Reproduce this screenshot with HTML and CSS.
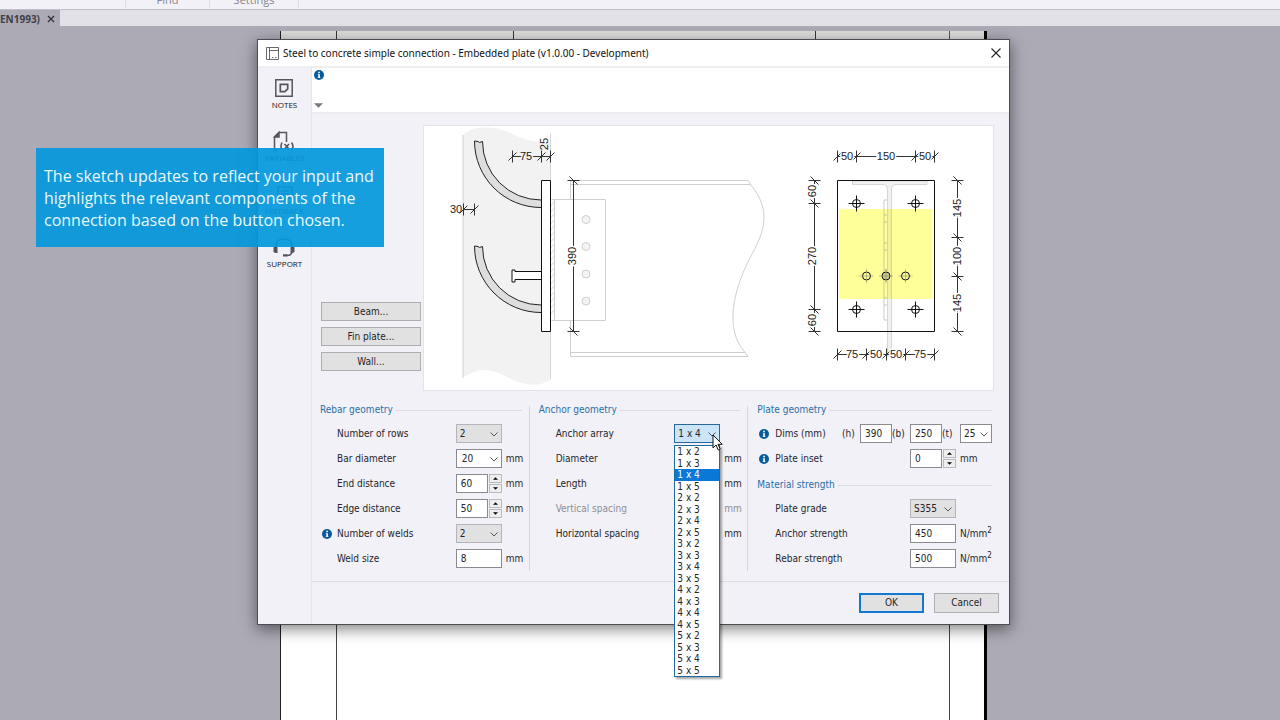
FILE: index.html
```html
<!DOCTYPE html>
<html lang="en">
<head>
<meta charset="utf-8">
<title>Steel to concrete simple connection</title>
<link rel="stylesheet" href="styles.css">
</head>
<body>
<div class="desktop">
  <header class="ribbon">
    <span class="ribbon-group ribbon-find">Find</span>
    <span class="ribbon-group ribbon-settings">Settings</span>
  </header>
  <nav class="tabs">
    <div class="tab">EN1993)
      <button class="tab-close" aria-label="Close tab"><svg width="8" height="8" viewBox="0 0 8 8"><path d="M1 1l6 6M7 1l-6 6" stroke="#34343c" stroke-width="1.4"/></svg></button>
    </div>
  </nav>
  <main class="workspace">
    <div class="paper">
      <div class="paper-head"><i></i><i></i><i></i></div>
      <div class="paper-body"></div>
    </div>
  </main>

  <section class="dialog" role="dialog" aria-labelledby="dlg-title">
    <header class="titlebar">
      <svg class="app-icon" width="13" height="13" viewBox="0 0 13 13" fill="none" stroke="#66666f"><path d="M.5 .5h12v12H.5zM3.500 .5v12M3.500 3.500h9"/><path d="M6 10.500h1.500M9 10.500h1.500" stroke-width="1.200"/></svg>
      <h1 id="dlg-title">Steel to concrete simple connection - Embedded plate (v1.0.00 - Development)</h1>
      <button class="close" aria-label="Close"><svg width="10" height="10" viewBox="0 0 10 10"><path d="M.5 .5l9 9M9.500 .5l-9 9" stroke="#222" stroke-width="1.100"/></svg></button>
    </header>
    <div class="dialog-body">
      <nav class="side">
        <button><svg width="20" height="20" viewBox="0 0 20 20" fill="none" stroke="#555562" stroke-width="1.500"><path d="M1.800 1.800h16.400v16.400H1.800z"/><path d="M6.300 6.300h7.400v4.600l-2.800 2.800H6.300z" stroke-width="1.700"/></svg>NOTES</button>
        <button><svg width="22" height="20" viewBox="0 0 22 20" fill="none" stroke="#555562" stroke-width="1.500"><path d="M5 19H1.500V6l4.500-4.500h7.500V11"/><path d="M1.500 6H6V1.500z" fill="#555562"/><path d="M9 11.500q-2 4 0 7.500M18.500 11.500q3 4 0 7.500M11.500 13l4.500 5M16 13l-4.500 5" stroke-width="1.600"/></svg>VARIABLES</button>
        <button><svg width="20" height="20" viewBox="0 0 20 20" fill="none" stroke="#555562" stroke-width="1.500"><path d="M3 3h14v11h-6l-3 4v-4H3zM6 7h8M6 10h8"/></svg>FEEDBACK</button>
        <button><svg width="22" height="20" viewBox="0 0 22 20" fill="none" stroke="#555562" stroke-width="1.700"><path d="M3 11V8q0-6 8-6t8 6v3M19 15q-.5 3.500-5 3.500"/><path d="M.5 10h4v6h-2l-2-1zM17.500 10h4v5l-2 1h-2zM10 17.300h4.500v2.200H10z" fill="#555562" stroke="none"/></svg>SUPPORT</button>
      </nav>
      <div class="main">
        <div class="notice">
          <svg class="info" viewBox="0 0 10 10"><circle cx="5" cy="5" r="5" fill="#075a9c"/><path d="M4.200 1.800h1.700v1.400H4.200zM3.800 4.200h2.100v3h.5v.9H3.700v-.9h.6V5.100h-.5z" fill="#fff"/></svg>
          <svg width="9" height="5" viewBox="0 0 9 5"><path d="M0 .2h9L4.500 4.800z" fill="#777781"/></svg>
        </div>
        <div class="overview">
          <div class="parts">
            <button>Beam...</button>
            <button>Fin plate...</button>
            <button>Wall...</button>
          </div>
          <svg class="sketch" viewBox="424 126 569 264" role="img" aria-label="Connection sketch">
            <defs>
              <path id="tv" d="M0-6V6M-4 4L4-4"/>
              <path id="th" d="M-6 0H6M-4-4L4 4"/>
              <g id="anchor"><circle r="4"/><path d="M-8 0H8M0-8V8"/></g>
              <g id="hole"><circle r="4"/><path d="M-7 0H7M0-7V7" stroke="#888870" stroke-width=".6"/></g>
            </defs>
            <path d="M463 135C475 124 495 126 510 133S535 143 551 142V379C540 388 525 386 505 376S475 370 463 378z" fill="#f2f2f2"/>
            <path d="M463 135V378M550.500 134V379" stroke="#d4d4d4" fill="none"/>
            <g fill="none" stroke="#cfcfcf">
              <path d="M570.500 200V180.500H748L751 185C772 211 764 232 752 254S724 316 739 344Q743 350 748 356.500H570.500V320M570.500 184.500H751M570.500 352.500H745"/>
              <path d="M551.500 199.500H605.500V320.500H551.500M554.500 200V320"/>
              <path d="M554 202l-3 4m3 2l-3 4m3 2l-3 4m3 2l-3 4m3 2l-3 4m3 2l-3 4m3 2l-3 4m3 2l-3 4m3 2l-3 4m3 2l-3 4m3 2l-3 4m3 2l-3 4m3 2l-3 4m3 2l-3 4m3 2l-3 4m3 2l-3 4m3 2l-3 4m3 2l-3 4m3 2l-3 4" stroke-width=".7"/>
              <g fill="#f3f3f3"><circle cx="586" cy="219.500" r="4"/><circle cx="586" cy="246.500" r="4"/><circle cx="586" cy="274" r="4"/><circle cx="586" cy="301" r="4"/></g>
            </g>
            <g fill="#dedede" stroke="#222">
              <path id="rebar" d="M541 207.500A66.500 66.500 0 0 1 474.500 141L478 141.500 479.500 142.500 482.500 141.500A58.500 58.500 0 0 0 541 200"/>
              <use href="#rebar" y="105"/>
            </g>
            <path d="M541.500 271.500H515V270H512V282H515V279.500H541.500" fill="#fff" stroke="#111"/>
            <path d="M541.500 180.500H550.500V331.500H541.500z" fill="#fff" stroke="#111"/>

            <g class="dim">
              <path d="M512 156.500H551M463 209.500H474.500M573.500 181V332"/>
              <use href="#tv" x="512.500" y="156.500"/><use href="#tv" x="541.500" y="156.500"/><use href="#tv" x="550.500" y="156.500"/>
              <use href="#tv" x="463.500" y="209.500"/><use href="#tv" x="474.500" y="209.500"/>
              <use href="#th" x="573.500" y="180.500"/><use href="#th" x="573.500" y="331.500"/>
            </g>
            <g class="num">
              <text class="on-wall" x="526" y="160">75</text>
              <text class="plain" x="456" y="213">30</text>
              <text class="plain" transform="translate(548 144)rotate(-90)">25</text>
              <text transform="translate(576 256)rotate(-90)">390</text>
            </g>

            <path d="M839 209h93.500v90H839z" fill="#ffff99"/>
            <path d="M852.500 181V184.500H884Q887.500 185 887.500 189V356H891.500V189Q891.500 185 895 184.500H927V181z" fill="#999" fill-opacity=".14" stroke="#999" stroke-opacity=".35"/>
            <path d="M887 200H884V320H887M884 215h3M884 222h3M884 243h3M884 250h3M884 270h3M884 277h3M884 298h3M884 305h3" fill="none" stroke="#999" stroke-opacity=".5"/>
            <path d="M837.500 180.500H934.500V331.500H837.500z" fill="none" stroke="#111"/>
            <g fill="none" stroke="#111">
              <use href="#anchor" x="856.500" y="203.500"/><use href="#anchor" x="915.500" y="203.500"/>
              <use href="#anchor" x="856.500" y="309.500"/><use href="#anchor" x="915.500" y="309.500"/>
              <use href="#hole" x="866.500" y="276"/><circle cx="886" cy="276" r="3.500" fill="#cfcf86" stroke="none"/><use href="#hole" x="886" y="276"/><use href="#hole" x="905.500" y="276"/>
            </g>
            <g class="dim">
              <path d="M837 156.500H935M837 354.500H935M814.500 181V332M957.500 181V332"/>
              <use href="#tv" x="837.500" y="156.500"/><use href="#tv" x="856.500" y="156.500"/><use href="#tv" x="915.500" y="156.500"/><use href="#tv" x="934.500" y="156.500"/>
              <use href="#tv" x="837.500" y="354.500"/><use href="#tv" x="866.500" y="354.500"/><use href="#tv" x="886.500" y="354.500"/><use href="#tv" x="905.500" y="354.500"/><use href="#tv" x="934.500" y="354.500"/>
              <use href="#th" x="814.500" y="180.500"/><use href="#th" x="814.500" y="203.500"/><use href="#th" x="814.500" y="309.500"/><use href="#th" x="814.500" y="331.500"/>
              <use href="#th" x="957.500" y="180.500"/><use href="#th" x="957.500" y="237.500"/><use href="#th" x="957.500" y="276.500"/><use href="#th" x="957.500" y="331.500"/>
            </g>
            <g class="num">
              <text x="847" y="160">50</text><text x="886" y="160">150</text><text x="925" y="160">50</text>
              <text x="852" y="358">75</text><text x="876" y="358">50</text><text x="896" y="358">50</text><text x="920" y="358">75</text>
              <text transform="translate(816 191)rotate(-90)">60</text>
              <text transform="translate(816 256)rotate(-90)">270</text>
              <text transform="translate(816 320)rotate(-90)">60</text>
              <text transform="translate(961 208)rotate(-90)">145</text>
              <text transform="translate(961 256)rotate(-90)">100</text>
              <text transform="translate(961 303)rotate(-90)">145</text>
            </g>
          </svg>
        </div>

        <form class="form">
          <div class="column">
            <h2>Rebar geometry</h2>
            <div class="row"><label for="rows">Number of rows</label><span class="select grey"><select id="rows"><option>2</option></select><svg viewBox="0 0 8 5"><path d="M.5 .5L4 4 7.500 .5"/></svg></span></div>
            <div class="row"><label for="bar">Bar diameter</label><span class="select wide-pad"><select id="bar"><option>20</option></select><svg viewBox="0 0 8 5"><path d="M.5 .5L4 4 7.500 .5"/></svg></span><span class="unit">mm</span></div>
            <div class="row"><label for="end">End distance</label><span class="spin"><input id="end" value="60"><span class="steps"><button type="button" aria-label="Increase"><svg viewBox="0 0 6 3"><path d="M0 3L3 0l3 3z"/></svg></button><button type="button" aria-label="Decrease"><svg viewBox="0 0 6 3"><path d="M0 0h6L3 3z"/></svg></button></span></span><span class="unit">mm</span></div>
            <div class="row"><label for="edge">Edge distance</label><span class="spin"><input id="edge" value="50"><span class="steps"><button type="button" aria-label="Increase"><svg viewBox="0 0 6 3"><path d="M0 3L3 0l3 3z"/></svg></button><button type="button" aria-label="Decrease"><svg viewBox="0 0 6 3"><path d="M0 0h6L3 3z"/></svg></button></span></span><span class="unit">mm</span></div>
            <div class="row"><svg class="info" viewBox="0 0 10 10"><circle cx="5" cy="5" r="5" fill="#075a9c"/><path d="M4.200 1.800h1.700v1.400H4.200zM3.800 4.200h2.100v3h.5v.9H3.700v-.9h.6V5.100h-.5z" fill="#fff"/></svg><label for="welds">Number of welds</label><span class="select grey"><select id="welds"><option>2</option></select><svg viewBox="0 0 8 5"><path d="M.5 .5L4 4 7.500 .5"/></svg></span></div>
            <div class="row"><label for="weld">Weld size</label><input id="weld" value="8"><span class="unit">mm</span></div>
          </div>

          <div class="column">
            <h2>Anchor geometry</h2>
            <div class="row"><label for="array">Anchor array</label>
              <span class="select open"><select id="array"><option>1 x 4</option></select><svg viewBox="0 0 8 5"><path d="M.5 .5L4 4 7.500 .5"/></svg>
                <ul class="list" role="listbox" aria-label="Anchor array">
                  <li role="option">1 x 2</li><li role="option">1 x 3</li><li role="option" aria-selected="true">1 x 4</li><li role="option">1 x 5</li>
                  <li role="option">2 x 2</li><li role="option">2 x 3</li><li role="option">2 x 4</li><li role="option">2 x 5</li>
                  <li role="option">3 x 2</li><li role="option">3 x 3</li><li role="option">3 x 4</li><li role="option">3 x 5</li>
                  <li role="option">4 x 2</li><li role="option">4 x 3</li><li role="option">4 x 4</li><li role="option">4 x 5</li>
                  <li role="option">5 x 2</li><li role="option">5 x 3</li><li role="option">5 x 4</li><li role="option">5 x 5</li>
                </ul>
                <svg class="cursor" viewBox="0 0 12 18"><path d="M1 1v13l3-3 2.200 5 2-1-2.200-4.700h4.200z"/></svg>
              </span></div>
            <div class="row"><label>Diameter</label><span class="unit">mm</span></div>
            <div class="row"><label>Length</label><span class="unit">mm</span></div>
            <div class="row off"><label>Vertical spacing</label><span class="unit">mm</span></div>
            <div class="row"><label>Horizontal spacing</label><span class="unit">mm</span></div>
          </div>

          <div class="column plate">
            <h2>Plate geometry</h2>
            <div class="row"><svg class="info" viewBox="0 0 10 10"><circle cx="5" cy="5" r="5" fill="#075a9c"/><path d="M4.200 1.800h1.700v1.400H4.200zM3.800 4.200h2.100v3h.5v.9H3.700v-.9h.6V5.100h-.5z" fill="#fff"/></svg><span class="label">Dims (mm)</span>
              <span class="dims"><label for="h">(h)</label><input id="h" value="390"><label for="b">(b)</label><input id="b" value="250"><label for="t">(t)</label><span class="select"><select id="t"><option>25</option></select><svg viewBox="0 0 8 5"><path d="M.5 .5L4 4 7.500 .5"/></svg></span></span></div>
            <div class="row"><svg class="info" viewBox="0 0 10 10"><circle cx="5" cy="5" r="5" fill="#075a9c"/><path d="M4.200 1.800h1.700v1.400H4.200zM3.800 4.200h2.100v3h.5v.9H3.700v-.9h.6V5.100h-.5z" fill="#fff"/></svg><label for="inset">Plate inset</label><span class="spin"><input id="inset" value="0"><span class="steps"><button type="button" aria-label="Increase"><svg viewBox="0 0 6 3"><path d="M0 3L3 0l3 3z"/></svg></button><button type="button" aria-label="Decrease"><svg viewBox="0 0 6 3"><path d="M0 0h6L3 3z"/></svg></button></span></span><span class="unit">mm</span></div>
            <h2>Material strength</h2>
            <div class="row"><label for="grade">Plate grade</label><span class="select grey"><select id="grade"><option>S355</option></select><svg viewBox="0 0 8 5"><path d="M.5 .5L4 4 7.500 .5"/></svg></span></div>
            <div class="row"><label for="fa">Anchor strength</label><input id="fa" value="450"><span class="unit">N/mm<sup>2</sup></span></div>
            <div class="row"><label for="fr">Rebar strength</label><input id="fr" value="500"><span class="unit">N/mm<sup>2</sup></span></div>
          </div>
        </form>
        <footer class="actions"><button class="primary">OK</button><button>Cancel</button></footer>
      </div>
    </div>
  </section>

  <aside class="callout">The sketch updates to reflect your input and highlights the relevant components of the connection based on the button chosen.</aside>
</div>
</body>
</html>
```
FILE: styles.css
```css
* { box-sizing: border-box; }
body {
  margin: 0;
  font: 10px/12px "DejaVu Sans Condensed", "DejaVu Sans", sans-serif;
  color: #25252b;
}
button, input, select { font: inherit; color: inherit; margin: 0; padding: 0; border-radius: 0; }
svg { display: block; }
h1, h2, ul { margin: 0; padding: 0; font-weight: normal; }

.desktop {
  position: relative;
  display: flex;
  flex-direction: column;
  height: 100vh;
  overflow: hidden;
  background: #abaab5;
}
.ribbon {
  flex: none;
  display: flex;
  height: 10px;
  padding-left: 125px;
  background: #f2f1f7;
  border-bottom: 1px solid #bfbec9;
  font: 11px/12px "Open Sans", "Noto Sans", sans-serif;
  color: #85858d;
  overflow: hidden;
}
.ribbon-group { height: 8px; padding-bottom: 2px; border-left: 1px solid #dddde3; display: flex; align-items: flex-end; justify-content: center; }
.ribbon-find { width: 84px; }
.ribbon-settings { width: 90px; border-right: 1px solid #dddde3; }
.tabs { flex: none; height: 16px; background: #e2e1e7; }
.tab {
  display: flex;
  align-items: center;
  gap: 7px;
  width: 60px;
  height: 16px;
  padding-top: 2px;
  background: #abaab5;
  font: bold 10px/14px "Open Sans", "Noto Sans", sans-serif;
  color: #3f3f48;
}
.tab-close { border: 0; background: none; }

.workspace { flex: 1; display: flex; padding: 5px 293px 0 280px; }
.paper { flex: 1; display: flex; flex-direction: column; background: #fff; border-left: 1px solid #222; border-right: 3px solid #000; }
.paper-head { height: 9px; display: grid; grid-template-columns: 56px 177px 302px 134px; background: #dcdcda; }
.paper-head i { border-right: 1px solid #333; }
.paper-head::after { content: ""; border-right: 1px solid #555; }
.paper-body { flex: 1; margin: 0 34px 0 55px; border: solid #444; border-width: 0 1px; }

.dialog {
  position: absolute;
  top: 39px;
  left: 257px;
  right: 270px;
  background: #f2f1f7;
  border: 1px solid #4c4c52;
  box-shadow: 0 4px 14px rgba(0, 0, 0, .5);
}
.titlebar {
  display: flex;
  align-items: center;
  gap: 4px;
  height: 28px;
  padding: 0 8px;
  background: #fff;
  border-bottom: 2px solid #efeff1;
}
.titlebar h1 { flex: 1; font: 10px/14px "Noto Sans", "Open Sans", sans-serif; color: #111; }
.close { border: 0; background: none; }
.dialog-body { display: flex; }
.side { flex: none; width: 54px; padding-top: 10px; border-right: 1px solid #e4e4ea; display: flex; flex-direction: column; gap: 17px; align-items: center; }
.side button { display: flex; flex-direction: column; align-items: center; justify-content: flex-start; gap: 1px; height: 36px; border: 0; background: none; font: 8px/12px "Open Sans", "Noto Sans", sans-serif; color: #111; }
.main { flex: 1; min-width: 0; }
.notice { display: flex; flex-direction: column; justify-content: space-between; height: 46px; padding: 2px 2px 4px; background: #fff; border-bottom: 2px solid #ececf0; }
.info { width: 10px; height: 10px; }

.overview { display: flex; align-items: flex-end; gap: 2px; padding: 11px 15px 0 9px; }
.parts { flex: none; width: 100px; display: flex; flex-direction: column; gap: 6px; padding-bottom: 20px; }
.parts button, .actions button { height: 19px; background: #e1e1e1; border: 1px solid #adadb2; }
.sketch { flex: 1; min-width: 0; background: #fff; border: 1px solid #e3e3e8; }
.dim { fill: none; stroke: #333; }
.num { font: 11px "Liberation Sans", Arial, sans-serif; fill: #222; stroke: #fff; stroke-width: 3px; paint-order: stroke; text-anchor: middle; }
.num .on-wall { stroke: #f2f2f2; }
.num .plain { stroke: none; }

.form { display: grid; grid-template-columns: 202fr 202fr 235fr; gap: 17px; padding: 12px 17px 0 8px; height: 191px; border-bottom: 1px solid #dddde3; }
.column { position: relative; min-width: 0; }
.column + .column::before { content: ""; position: absolute; left: -10px; top: 3px; height: 165px; border-left: 1px solid #d6d6dc; }
h2 { display: flex; align-items: center; gap: 3px; height: 14px; margin-bottom: 4px; color: #2a6fa8; font-size: 10px; white-space: nowrap; }
h2::after { content: ""; flex: 1; border-top: 1px solid #dadae0; }
.row + h2 { margin-top: 7px; }
.row { display: grid; grid-template-columns: 17px 1fr 46px 20px; height: 25px; align-items: center; white-space: nowrap; }
.plate .row { grid-template-columns: 18px 1fr 46px 36px; }
.row > .info { grid-column: 1; grid-row: 1; margin-left: 2px; }
.row > label, .row > .label { grid-column: 2; grid-row: 1; }
.row > .select, .row > .spin, .row > input { grid-column: 3; grid-row: 1; }
.unit { grid-column: 4; grid-row: 1; padding-left: 4px; }
sup { font-size: 8px; line-height: 0; }
.off { color: #8d8d94; }
input { width: 100%; height: 19px; padding-left: 4px; background: #fff; border: 1px solid #8a8a90; }
.select { position: relative; display: block; height: 19px; }
.select select { appearance: none; width: 100%; height: 19px; padding-left: 3px; background: #fff; border: 1px solid #8a8a90; }
.wide-pad select { padding-left: 5px; }
.select > svg { position: absolute; right: 4px; top: 8px; width: 8px; height: 5px; fill: none; stroke: #55555c; pointer-events: none; }
.grey select { background: #e1e1e1; border-color: #b4b4ba; }
.open select { background: #cce4f7; border-color: #26699a; }
.spin { display: flex; gap: 1px; height: 19px; }
.spin input { width: 32px; }
.steps { width: 13px; display: flex; flex-direction: column; gap: 1px; }
.steps button { flex: 1; display: flex; align-items: center; justify-content: center; background: #eee; border: 1px solid #b8b8be; }
.steps svg { width: 5px; height: 3px; }
.dims { grid-column: 2 / 5; grid-row: 1; display: flex; justify-content: flex-end; align-items: center; }
.dims label { width: 18px; }
.dims input, .dims .select { width: 32px; }
.list {
  position: absolute;
  z-index: 2;
  top: 21px;
  left: 0;
  width: 46px;
  height: 232px;
  display: grid;
  grid-template-rows: repeat(20, 1fr);
  background: #fff;
  border: 1px solid #1c6c9c;
  box-shadow: 2px 2px 2px rgba(0, 0, 0, .35);
  list-style: none;
  line-height: 12px;
}
.list li { padding-left: 2px; min-height: 0; }
.list [aria-selected] { background: #0a78d7; color: #fff; }
.select > .cursor { z-index: 3; top: 10px; right: -4px; width: 12px; height: 18px; fill: #fff; stroke: #111; }

.actions { display: flex; justify-content: flex-end; gap: 10px; padding: 11px 10px 11px; }
.actions button { width: 65px; height: 20px; }
.actions .primary { border: 2px solid #1478d0; }

.callout {
  position: absolute;
  left: 36px;
  top: 148px;
  width: 348px;
  padding: 17px 8px 16px;
  background: rgba(3, 152, 220, .92);
  font: 16px/22px "Open Sans", "Noto Sans", sans-serif;
  color: #e9f8ff;
}
```
